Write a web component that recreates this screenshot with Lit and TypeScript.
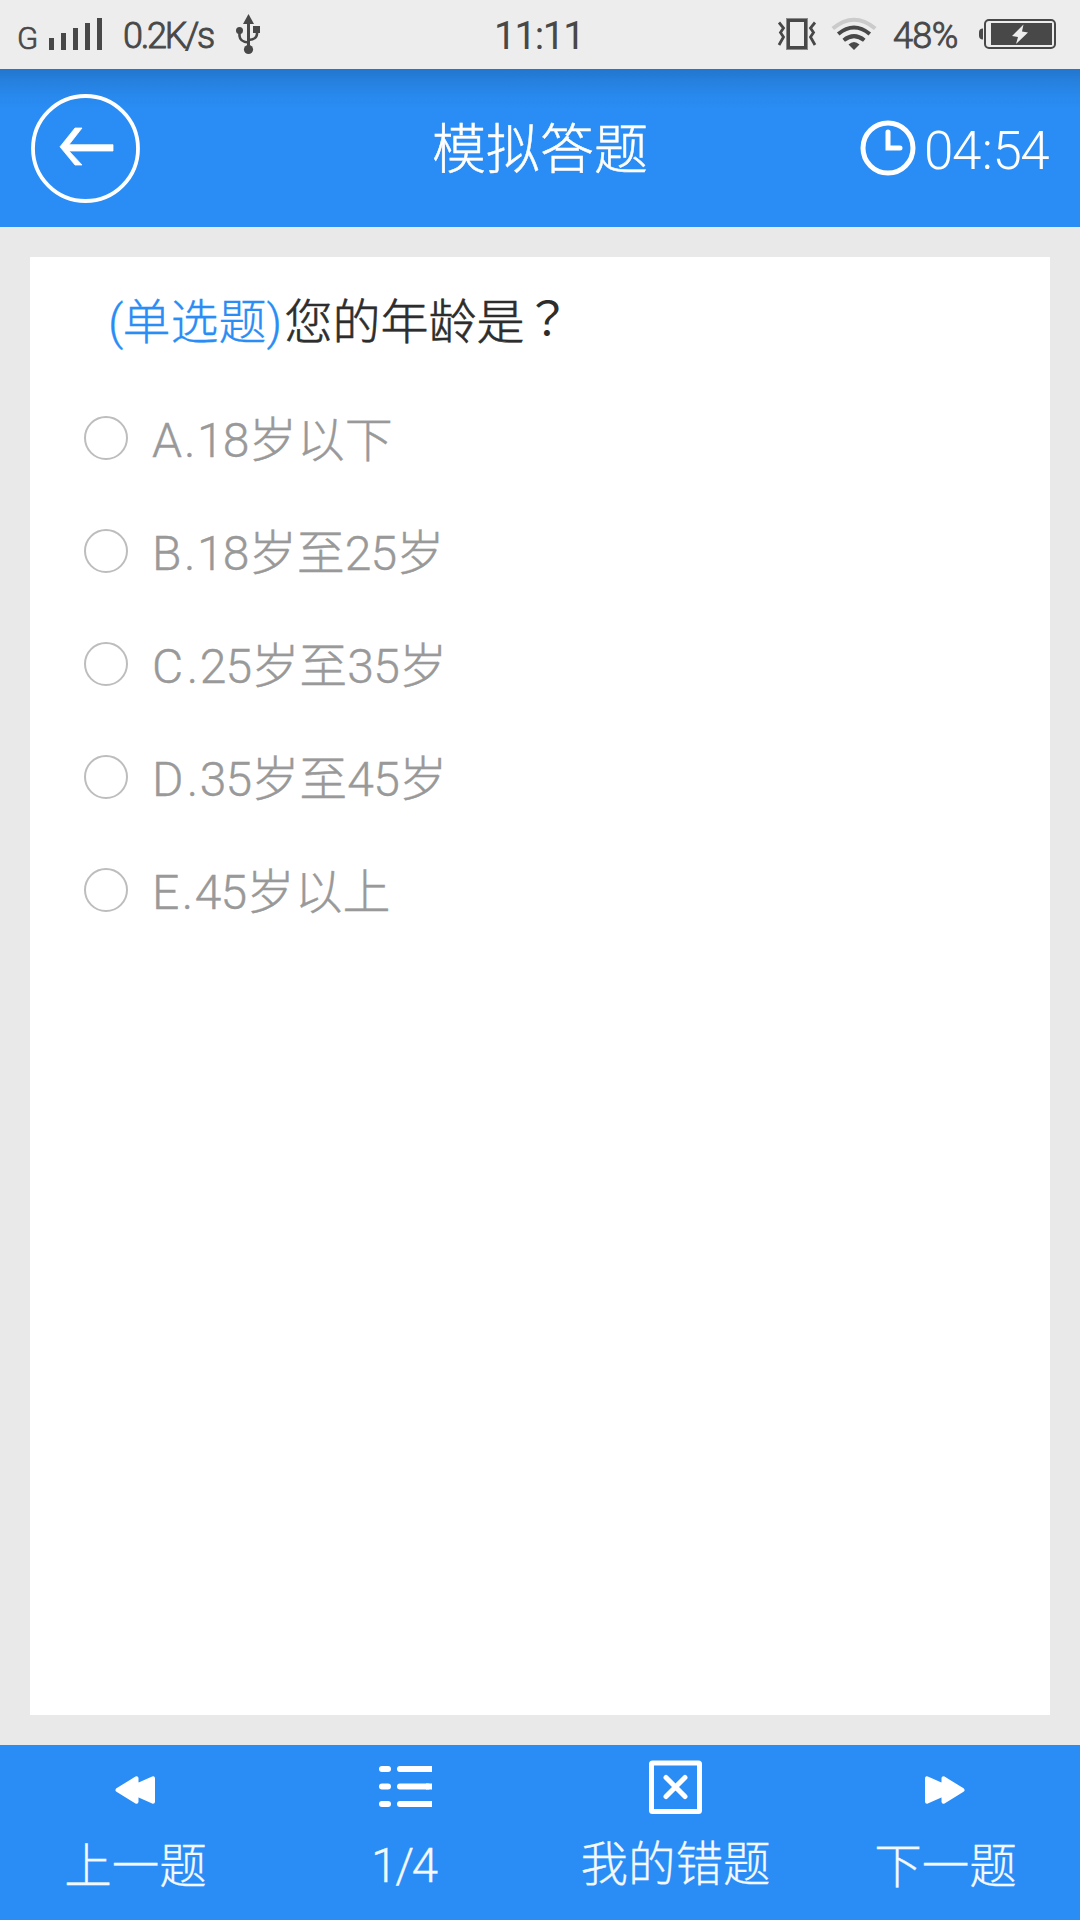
import { LitElement, html, css, svg } from "lit";
import { customElement, property } from "lit/decorators.js";

// Letter, its advance in em, and the answer text.
const OPTIONS: [string, number, string][] = [
  ["A", 0.667, "18岁以下"],
  ["B", 0.667, "18岁至25岁"],
  ["C", 0.722, "25岁至35岁"],
  ["D", 0.722, "35岁至45岁"],
  ["E", 0.62, "45岁以上"],
];

const prevIcon = svg`<svg width="54" height="54" viewBox="0 0 54 54"><path d="M9.500 30L28.500 18.300V41.700ZM18.500 30L45 18.300V41.700Z" fill="#fff" stroke="#fff" stroke-width="4" stroke-linejoin="round"/></svg>`;

@customElement("status-bar")
export class StatusBar extends LitElement {
  static styles = css`
    :host { display: flex; height: 69px; background: #ededed; color: #484848;
      font-family: Roboto, "Noto Sans CJK SC", sans-serif; line-height: 40px; white-space: nowrap; }
    .side { flex: 1; display: flex; align-items: flex-start; }
    .right { justify-content: flex-end; }
    svg { display: block; flex: none; }
    .net { font-size: 31px; margin: 19px 0 0 17px; width: 32px; font-weight: 300; -webkit-text-stroke: 0.7px #484848; }
    .speed { font-size: 36px; margin: 16px 0 0 19px; width: 112px; letter-spacing: -2.3px; font-weight: 300; -webkit-text-stroke: 0.9px #484848; }
    .clock { font-size: 39px; font-weight: 400; margin: 16px 6px 0 0; letter-spacing: -1.5px; width: 86px; text-align: center; }
    .pct { font-size: 36px; margin: 16px 0 0 16px; width: 86px; letter-spacing: -0.6px; font-weight: 300; -webkit-text-stroke: 0.9px #484848; }
    .battery { margin-right: 24px; }
  `;
  render() {
    return html`
      <div class="side">
        <span class="net">G</span>
        <svg width="55" height="69" viewBox="49 0 55 69" fill="#484848">
          <path d="M49 38h5v12h-5zM61 33h5v17h-5zM73 28h5v22h-5zM85 23h5v27h-5zM97 18h5v32h-5z"/>
        </svg>
        <span class="speed">0.2K/s</span>
        <svg width="26" height="69" viewBox="235 0 26 69">
          <g fill="#484848">
            <path d="M248.500 14l5.500 10h-11z"/><path d="M247 22h3v24h-3z"/>
            <circle cx="248.500" cy="49.500" r="4.600"/><circle cx="239.500" cy="30.500" r="3.500"/><path d="M253 26h7v7h-7z"/>
          </g>
          <path d="M239.500 32V36Q240 42 248.500 42.500M257 32V34Q256.500 39.500 248.500 40" fill="none" stroke="#484848" stroke-width="2.600"/>
        </svg>
      </div>
      <span class="clock">11:11</span>
      <div class="side right">
        <svg width="40" height="69" viewBox="777 0 40 69" fill="none">
          <path d="M787 19h20v30h-20z" stroke="#8b8b8b" stroke-width="2"/>
          <path d="M788.500 20.500h17v27h-17z" stroke="#484848" stroke-width="3"/>
          <path d="M779 22.500l4.500 5.500-3 4.500 3 4.500-4.500 8M815 22.500l-4.500 5.500 3 4.500-3 4.500 4.500 8" stroke="#484848" stroke-width="2.800"/>
        </svg>
        <svg class="wifi" width="60" height="69" viewBox="817 0 60 69" fill="none" stroke="#484848">
          <path d="M832.800 28.500Q854 11 875.200 28.500" stroke="#cbcbcb" stroke-width="4"/>
          <path d="M838.200 34Q854 21 869.800 34" stroke-width="4"/>
          <path d="M843.700 40.200Q854 32 864.300 40.200" stroke-width="4"/>
          <path d="M848.500 44.500Q854 39.500 859.500 44.500L854 50Z" fill="#484848" stroke="none"/>
        </svg>
        <span class="pct">48%</span>
        <svg class="battery" width="77" height="69" viewBox="979 0 77 69">
          <path d="M983 28.500v11q-4 0-4-4v-3q0-4 4-4z" fill="#484848"/>
          <rect x="985" y="20" width="70" height="28" rx="4" fill="none" stroke="#484848" stroke-width="2"/>
          <path d="M991 23h61v22h-61z" fill="#484848"/>
          <path d="M1023.500 24.500l-11.500 11.500 6 1-2 7 12-11.500-6-1z" fill="#ededed"/>
        </svg>
      </div>`;
  }
}

@customElement("mixed-text")
export class MixedText extends LitElement {
  static styles = css`
    :host { display: block; white-space: nowrap; }
    .latin { font-family: Roboto, sans-serif; letter-spacing: var(--latin-spacing, -0.8px); }
  `;
  @property() text = "";
  render() {
    const runs = this.text.match(/[\x20-\x7e]+|[^\x20-\x7e]+/g) ?? [];
    return html`${runs.map((r) => (/^[\x20-\x7e]/.test(r) ? html`<span class="latin">${r}</span>` : r))}`;
  }
}

@customElement("app-root")
export class AppRoot extends LitElement {
  static styles = css`
    :host { display: flex; flex-direction: column; width: 1080px; height: 1920px; background: #e9e9e9;
      font-family: "Noto Sans CJK SC", sans-serif; font-weight: 300; overflow: hidden; }
    svg { display: block; flex: none; }
    .header { height: 158px; flex: none; display: grid; grid-template-columns: 1fr auto 1fr; color: #fff;
      background: linear-gradient(#2276ce 0, #2680de 12px, #2888ec 26px, #298df5 40px); }
    .back { margin: 24px 0 0 30px; }
    .title { font-size: 54px; line-height: 80px; margin-top: 37px; -webkit-text-stroke: 0.5px #fff; }
    .timer { display: flex; justify-content: flex-end; padding-right: 31px; }
    .timer svg { margin-top: 51px; }
    .time { font-family: Roboto, sans-serif; font-size: 53px; letter-spacing: -1.5px; line-height: 60px; margin: 52px 0 0 8px; width: 125px; white-space: nowrap; }
    .colon { padding: 0 1px 0 2px; }
    .card { flex: 1; margin: 30px; background: #fff; }
    .question { font-size: 48px; line-height: 70px; padding: 26px 0 0 78px; height: 124px; box-sizing: border-box; color: #2d2d2d; display: flex; }
    .asked { -webkit-text-stroke: 0.6px #2d2d2d; }
    .kind { color: #298df5; margin-right: 3px; -webkit-text-stroke: 0.3px #298df5; }
    .mark { font-family: "Noto Sans CJK JP", sans-serif; font-weight: 400; font-size: 46px; line-height: 65px; }
    .option { height: 113px; display: flex; align-items: center; padding-left: 54px; color: #999; font-size: 48px; line-height: 70px; box-sizing: border-box; -webkit-text-stroke: 0.4px #999; }
    .answer { display: flex; align-items: baseline; margin-top: 2px; }
    .letter, .dot { font-family: Roboto, sans-serif; }
    .dot { width: 13px; }
    .radio { width: 44px; height: 44px; box-sizing: border-box; border: 2px solid #bdbdbd; border-radius: 50%; margin-right: 24px; }
    .footer { height: 175px; flex: none; background: #298df5; display: grid; grid-template-columns: repeat(4, 1fr); color: #f4f9ff; }
    .tab { display: flex; flex-direction: column; align-items: center; padding-top: 15px; font-size: 47.5px; line-height: 70px; --latin-spacing: -2.2px; }
    .tab mixed-text { margin: 14px 0 0 1px; -webkit-text-stroke: 0.3px #f4f9ff; }
    .tab .raised { margin-top: 12px; }
    .tab .count { margin: 13px 3px 0 0; }
    .flip { transform: scaleX(-1); }
  `;
  render() {
    return html`
      <status-bar></status-bar>
      <div class="header">
        <svg class="back" width="111" height="111" viewBox="30 93 111 111" fill="none">
          <circle cx="85.500" cy="148.500" r="52.500" stroke="#fff" stroke-width="3.800"/>
          <path d="M60 146.800L75 128H82L69 144.700H113V151H69L82 165H75Z" fill="#fff" stroke="#fff" stroke-width="0.800"/>
        </svg>
        <span class="title">模拟答题</span>
        <div class="timer">
          <svg width="56" height="56" viewBox="0 0 56 56" fill="none" stroke="#fff" stroke-width="5">
            <circle cx="28" cy="28" r="25"/><path d="M28 12V28H40" stroke-linecap="round"/>
          </svg>
          <span class="time">04<span class="colon">:</span>54</span>
        </div>
      </div>
      <div class="card">
        <div class="question"><mixed-text class="kind" text="(单选题)"></mixed-text><span class="asked">您的年龄是</span><span class="mark">？</span></div>
        ${OPTIONS.map(
          ([letter, advance, text]) => html`<div class="option">
            <span class="radio"></span>
            <div class="answer"><span class="letter" style="width:${advance}em">${letter}</span><span class="dot">.</span><mixed-text text=${text}></mixed-text></div>
          </div>`
        )}
      </div>
      <div class="footer">
        <div class="tab">${prevIcon}<mixed-text text="上一题"></mixed-text></div>
        <div class="tab">
          <svg width="54" height="54" viewBox="0 0 54 54" stroke="#fff" stroke-width="6">
            <path d="M4 9h6M4 26.500h6M4 44h6M22 9h28M22 26.500h28M22 44h28" stroke-linecap="round"/>
            <path d="M48 9h6M48 26.500h6M48 44h6"/>
          </svg>
          <mixed-text class="count" text="1/4"></mixed-text>
        </div>
        <div class="tab">
          <svg width="54" height="54" viewBox="0 0 54 54" fill="none" stroke="#fff" stroke-width="5">
            <rect x="3.500" y="3" width="48" height="48.500" rx="1"/><path d="M18 17.500l19 19M37 17.500l-19 19" stroke-linecap="round"/>
          </svg>
          <mixed-text class="raised" text="我的错题"></mixed-text>
        </div>
        <div class="tab"><div class="flip">${prevIcon}</div><mixed-text text="下一题"></mixed-text></div>
      </div>`;
  }
}
